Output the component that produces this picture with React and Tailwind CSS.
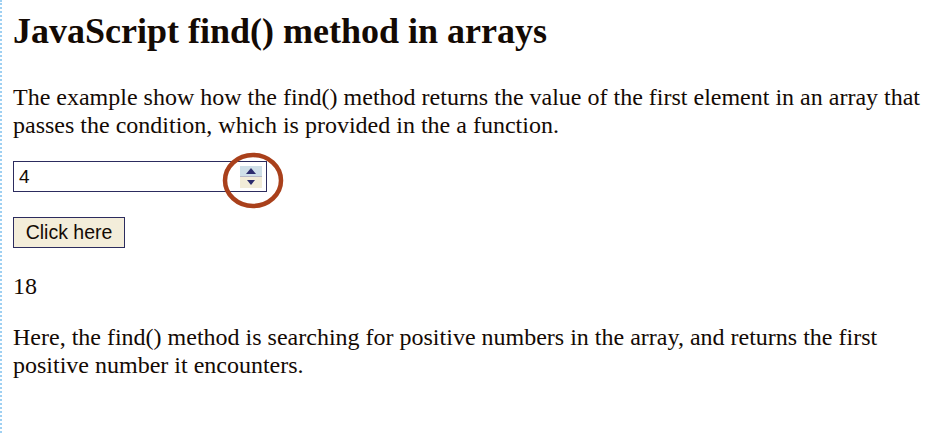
export default function App() {
  return (
    <div className="min-h-[433px] w-[931px] border-l-2 border-dotted border-[#9fd0f2] bg-white pl-[11px] text-[#140a04]" style={{ fontFamily: '"Liberation Serif", "Times New Roman", serif' }}>
      <h1 className="pt-[11px] text-[36px] font-bold leading-[40px]">JavaScript find() method in arrays</h1>

      <p className="mt-[32px] text-[24px] leading-[28px]">
        The example show how the find() method returns the value of the first element in an array that passes the condition, which is provided in the a function.
      </p>

      {/* number input with the marked spinner */}
      <div className="relative mt-[22px] flex h-[31px] w-[254px] items-center border border-[#2c2c5e] bg-white" style={{ fontFamily: '"Liberation Sans", Arial, sans-serif' }}>
        <span className="pl-[5px] text-[19px] leading-none">4</span>
        <div className="ml-auto mr-[4px] flex h-[22px] w-[22px] flex-col">
          <div className="flex flex-1 items-center justify-center bg-[#cfdfe8]">
            <svg width="10" height="6" viewBox="0 0 10 6"><path d="M5 0 L10 6 L0 6 Z" fill="#2c2c6e" /></svg>
          </div>
          <div className="h-px bg-[#b8b8c8]" />
          <div className="flex flex-1 items-center justify-center bg-[#f2ecd8]">
            <svg width="8" height="5" viewBox="0 0 8 5"><path d="M0 0 L8 0 L4 5 Z" fill="#2c2c6e" /></svg>
          </div>
        </div>
        <svg className="absolute left-[207px] top-[-11px]" width="64" height="60" viewBox="0 0 64 60">
          <ellipse cx="32" cy="29.5" rx="28" ry="25.5" fill="none" stroke="#a9401b" strokeWidth="4.5" />
        </svg>
      </div>

      <button className="mt-[25px] flex h-[31px] w-[112px] items-center justify-center border border-[#2c2c5e] bg-[#f3edda] text-[19.5px] text-[#140a04]" style={{ fontFamily: '"Liberation Sans", Arial, sans-serif' }}>
        Click here
      </button>

      <p className="mt-[24px] text-[24px] leading-[28px]">18</p>

      <p className="mt-[23px] text-[24px] leading-[28px]">
        Here, the find() method is searching for positive numbers in the array, and returns the first positive number it encounters.
      </p>
    </div>
  );
}
